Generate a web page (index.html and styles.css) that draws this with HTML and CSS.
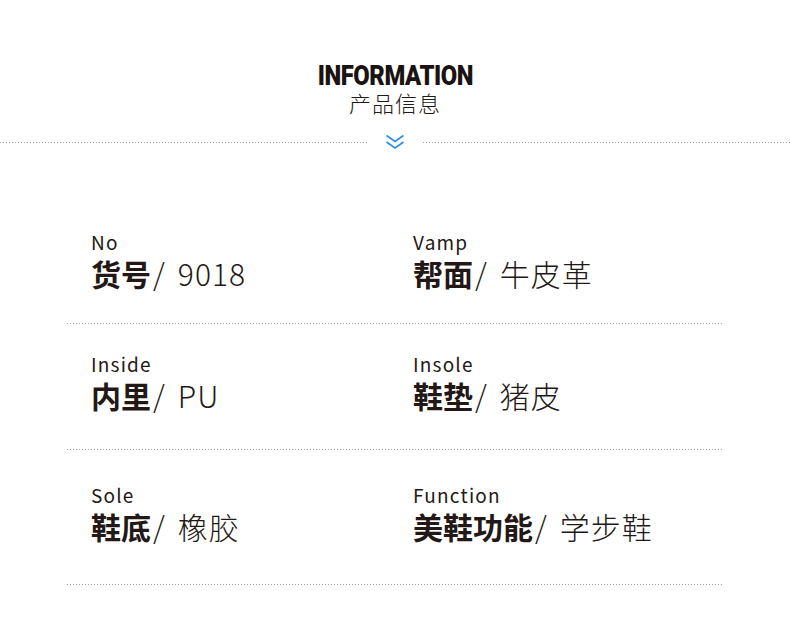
FILE: index.html
```html
<!DOCTYPE html>
<html lang="zh">
<head>
<meta charset="utf-8">
<title>INFORMATION 产品信息</title>
<link rel="stylesheet" href="styles.css">
</head>
<body>
<div class="page">
  <header class="head">
    <div class="title-en">INFORMATION</div>
    <div class="title-cn">产品信息</div>
    <div class="sep">
      <span class="sep-line"></span>
      <svg class="chev" width="20" height="16" viewBox="0 0 20 16">
        <path d="M1.5 1.5 L10 7.5 L18.5 1.5" fill="none" stroke="#2b8ee6" stroke-width="1.6"/>
        <path d="M1.5 8 L10 14 L18.5 8" fill="none" stroke="#2b8ee6" stroke-width="1.6"/>
      </svg>
      <span class="sep-line"></span>
    </div>
  </header>

  <section class="table">
    <div class="row row1">
      <div class="cell">
        <div class="label">No</div>
        <div class="value"><b>货号</b><span class="slash">/</span>9018</div>
      </div>
      <div class="cell">
        <div class="label">Vamp</div>
        <div class="value"><b>帮面</b><span class="slash">/</span>牛皮革</div>
      </div>
    </div>
    <div class="row row2">
      <div class="cell">
        <div class="label">Inside</div>
        <div class="value"><b>内里</b><span class="slash">/</span>PU</div>
      </div>
      <div class="cell">
        <div class="label">Insole</div>
        <div class="value"><b>鞋垫</b><span class="slash">/</span>猪皮</div>
      </div>
    </div>
    <div class="row row3">
      <div class="cell">
        <div class="label">Sole</div>
        <div class="value"><b>鞋底</b><span class="slash">/</span>橡胶</div>
      </div>
      <div class="cell">
        <div class="label">Function</div>
        <div class="value"><b>美鞋功能</b><span class="slash">/</span>学步鞋</div>
      </div>
    </div>
  </section>
</div>
</body>
</html>
```
FILE: styles.css
```css
html, body {
  margin: 0;
  padding: 0;
  background: #ffffff;
}
body {
  font-family: "Noto Sans CJK SC", "Noto Sans", sans-serif;
  color: #231815;
}
.page {
  width: 790px;
  height: 634px;
  overflow: hidden;
}
.head {
  padding-top: 60px;
  display: flex;
  flex-direction: column;
  align-items: center;
}
.title-en {
  font-family: "Roboto", "Liberation Sans", sans-serif;
  font-weight: 900;
  font-size: 28px;
  line-height: 32px;
  letter-spacing: -0.5px;
  transform: scaleX(0.85);
  color: #1a1311;
}
.title-cn {
  margin-top: -4px;
  font-weight: 300;
  font-size: 22px;
  line-height: 28px;
  letter-spacing: 1px;
  color: #231815;
}
.sep {
  width: 100%;
  margin-top: 18px;
  display: flex;
  align-items: center;
  gap: 18px;
}
.sep-line {
  flex: 1;
  height: 1px;
  background-image: repeating-linear-gradient(to right, #a0a0a0 0, #a0a0a0 1px, transparent 1px, transparent 3px);
}
.chev {
  display: block;
}
.table {
  margin: 0 67px;
}
.row {
  display: grid;
  grid-template-columns: 322px 1fr;
  padding-left: 24px;
  background-image: repeating-linear-gradient(to right, #a0a0a0 0, #a0a0a0 1px, transparent 1px, transparent 3px);
  background-size: 100% 1px;
  background-position: left bottom;
  background-repeat: no-repeat;
}
.row1 { padding-top: 80px; padding-bottom: 32px; }
.row2 { padding-top: 28px; padding-bottom: 36px; }
.row3 { padding-top: 33px; padding-bottom: 40px; }
.label {
  font-size: 19px;
  line-height: 24px;
  letter-spacing: 1.2px;
  font-weight: 400;
  color: #231815;
}
.value {
  font-size: 30px;
  line-height: 38px;
  font-weight: 300;
  letter-spacing: 1px;
  color: #231815;
  white-space: nowrap;
}
.value b {
  font-weight: 700;
  letter-spacing: 0;
}
.slash {
  margin-right: 12px;
  margin-left: 2px;
}
```
